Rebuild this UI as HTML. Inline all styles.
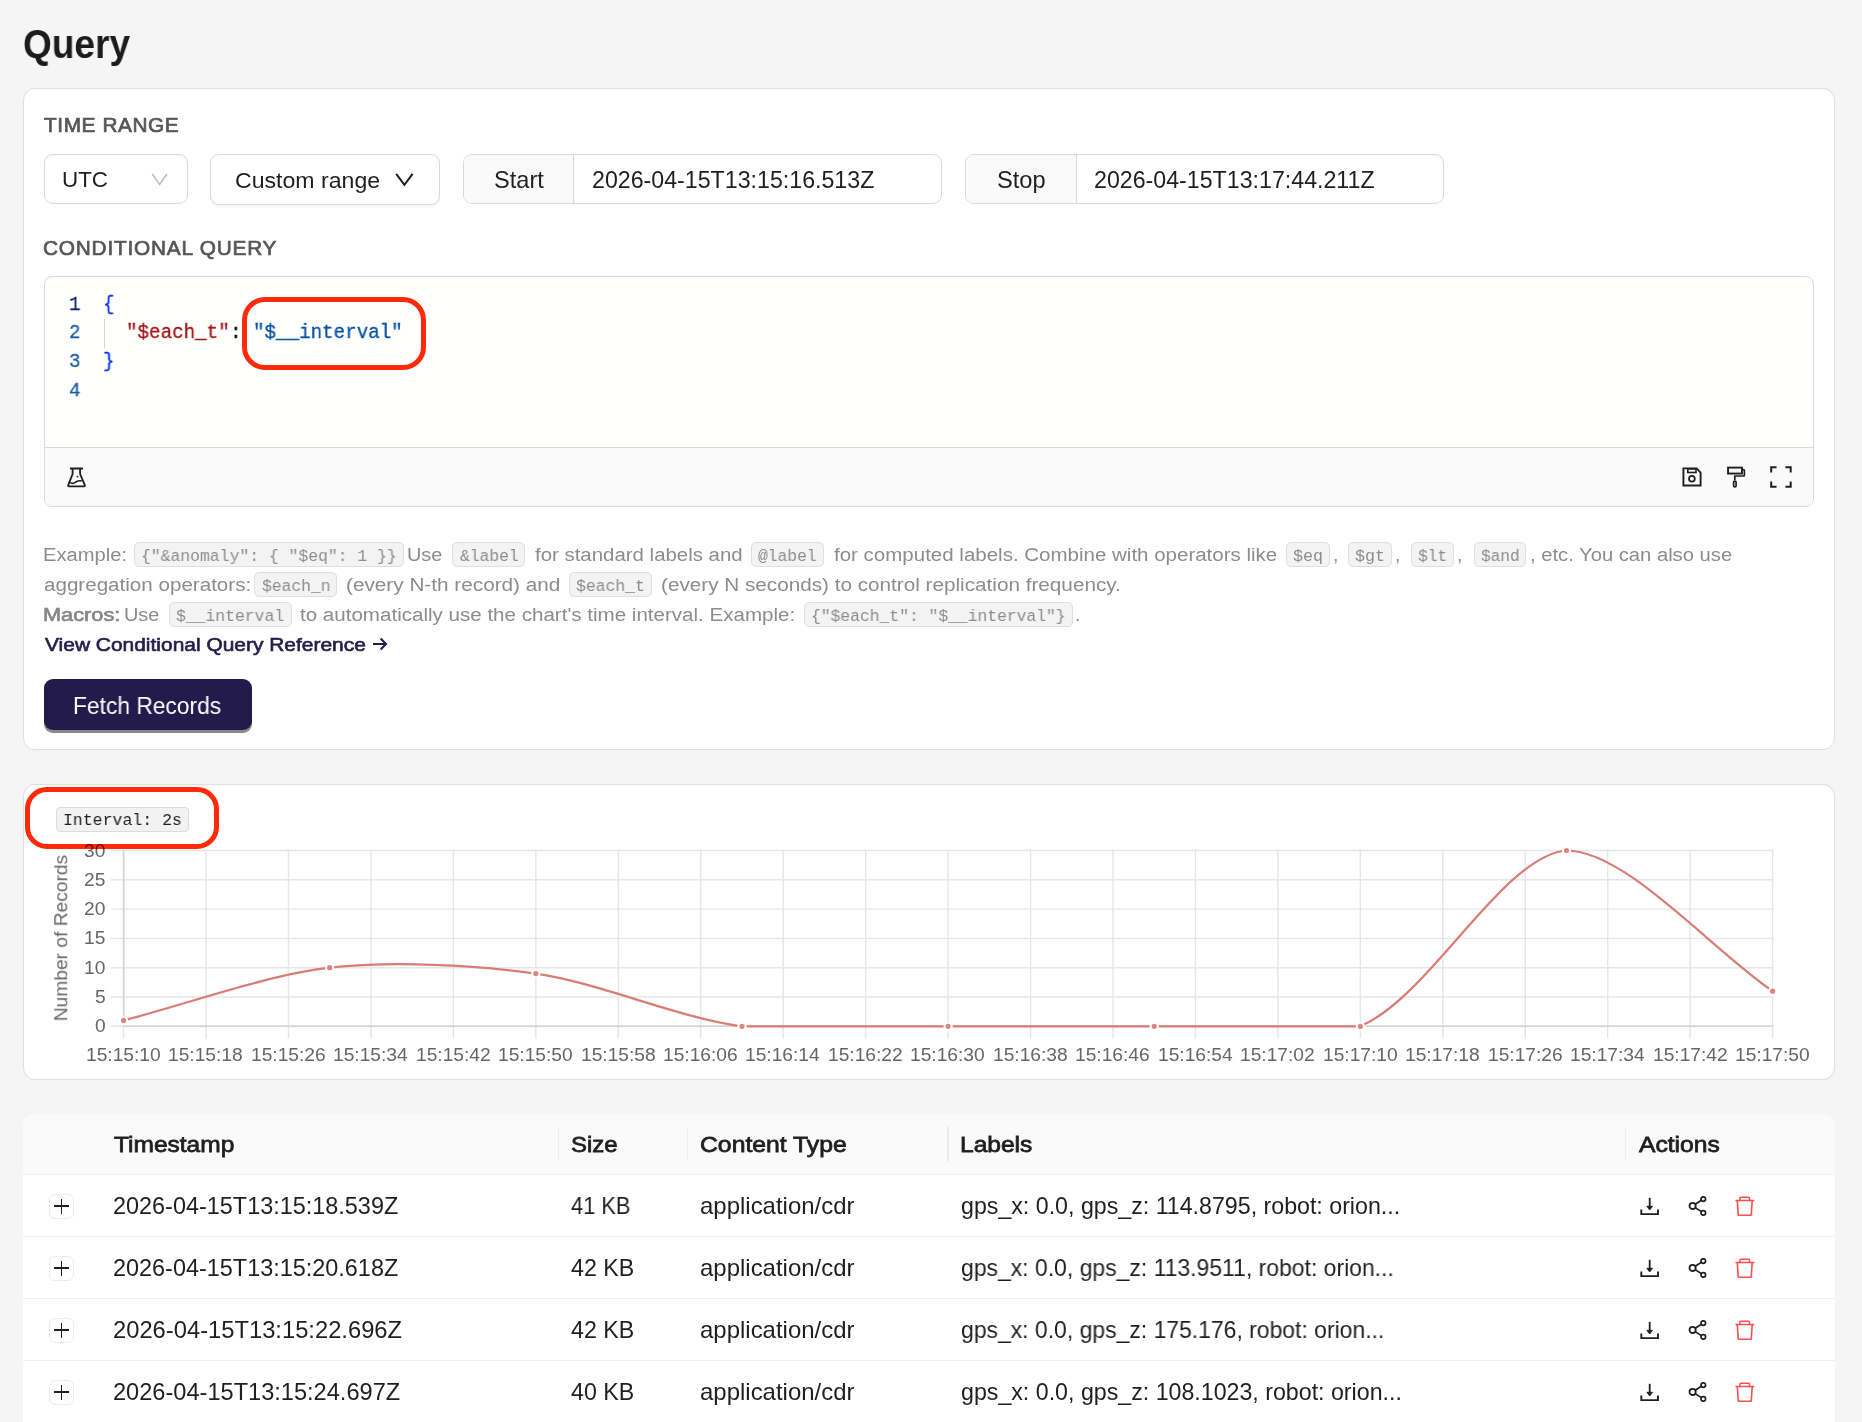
<!DOCTYPE html>
<html><head><meta charset="utf-8"><title>Query</title>
<style>
html,body{margin:0;padding:0;}
body{width:1862px;height:1422px;overflow:hidden;background:#f5f5f5;position:relative;font-family:'Liberation Sans',sans-serif;}
.t{position:absolute;white-space:pre;line-height:0;transform-origin:0 0;will-change:transform;}
.b{position:absolute;}
</style></head><body>
<div class="t" style="left:23.22px;top:44.19px;font-size:39.8px;color:#1c1c1c;font-weight:bold;transform:scaleX(0.9300);">Query</div>
<div class="b" style="left:23px;top:88px;width:1812.00px;height:662.00px;background:#fff;border:1px solid #dedede;border-radius:12px;box-sizing:border-box;"></div>
<div class="t" style="left:44.03px;top:124.68px;font-size:20.8px;color:#575757;-webkit-text-stroke:0.71px #575757;letter-spacing:0.592px;">TIME RANGE</div>
<div class="b" style="left:44px;top:154px;width:144.00px;height:50.00px;background:#fff;border:1px solid #d9d9d9;border-radius:9px;box-sizing:border-box;"></div>
<div class="t" style="left:61.78px;top:180.03px;font-size:22.4px;color:#1f1f1f;transform:scaleX(0.9895);">UTC</div>
<svg class="b" style="left:150px;top:171px;" width="20" height="16" viewBox="0 0 20 16"><polyline points="2.2,3 9.6,13.4 17,3" fill="none" stroke="#bdbdbd" stroke-width="1.6"/></svg>
<div class="b" style="left:210px;top:154px;width:230.00px;height:50.80px;background:#fff;border:1px solid #d9d9d9;border-radius:9px;box-sizing:border-box;box-shadow:0 3px 0 rgba(0,0,0,0.025);"></div>
<div class="t" style="left:234.84px;top:180.73px;font-size:22.4px;color:#1f1f1f;transform:scaleX(1.0317);">Custom range</div>
<svg class="b" style="left:392px;top:170px;" width="24" height="18" viewBox="0 0 24 18"><polyline points="4.2,3.9 12.4,14.9 20.6,3.9" fill="none" stroke="#1f1f1f" stroke-width="2"/></svg>
<div class="b" style="left:463px;top:154px;width:479.00px;height:50.00px;background:#fff;border:1px solid #d9d9d9;border-radius:9px;box-sizing:border-box;"></div>
<div class="b" style="left:464px;top:155px;width:109.00px;height:48.00px;background:#fafafa;border-radius:8px 0 0 8px;"></div>
<div class="b" style="left:573px;top:155px;width:1.00px;height:48.00px;background:#d9d9d9;"></div>
<div class="t" style="left:493.64px;top:179.95px;font-size:23.2px;color:#1f1f1f;transform:scaleX(1.0169);">Start</div>
<div class="t" style="left:592.14px;top:179.95px;font-size:23.2px;color:#1f1f1f;">2026-04-15T13:15:16.513Z</div>
<div class="b" style="left:965px;top:154px;width:479.00px;height:50.00px;background:#fff;border:1px solid #d9d9d9;border-radius:9px;box-sizing:border-box;"></div>
<div class="b" style="left:966px;top:155px;width:110.00px;height:48.00px;background:#fafafa;border-radius:8px 0 0 8px;"></div>
<div class="b" style="left:1076px;top:155px;width:1.00px;height:48.00px;background:#d9d9d9;"></div>
<div class="t" style="left:996.54px;top:179.95px;font-size:23.2px;color:#1f1f1f;transform:scaleX(1.0196);">Stop</div>
<div class="t" style="left:1093.84px;top:179.95px;font-size:23.2px;color:#1f1f1f;">2026-04-15T13:17:44.211Z</div>
<div class="t" style="left:43.46px;top:248.18px;font-size:20.8px;color:#575757;-webkit-text-stroke:0.71px #575757;letter-spacing:0.798px;">CONDITIONAL QUERY</div>
<div class="b" style="left:44px;top:276px;width:1770.00px;height:231.00px;background:#fffffe;border:1px solid #d9d9d9;border-radius:8px;box-sizing:border-box;overflow:hidden;"></div>
<div class="b" style="left:45px;top:447px;width:1768.00px;height:59.00px;background:#fafafa;border-top:1px solid #dadada;border-radius:0 0 7px 7px;box-sizing:border-box;"></div>
<div class="t" style="left:68.60px;top:304.55px;font-size:20.5px;font-family:'Liberation Mono',monospace;color:#0b216f;transform:scaleX(0.9366);-webkit-text-stroke:0.3px #0b216f">1</div>
<div class="t" style="left:68.60px;top:333.35px;font-size:20.5px;font-family:'Liberation Mono',monospace;color:#1c5ea6;transform:scaleX(0.9366);-webkit-text-stroke:0.3px #1c5ea6">2</div>
<div class="t" style="left:68.60px;top:362.15px;font-size:20.5px;font-family:'Liberation Mono',monospace;color:#1c5ea6;transform:scaleX(0.9366);-webkit-text-stroke:0.3px #1c5ea6">3</div>
<div class="t" style="left:68.60px;top:390.95px;font-size:20.5px;font-family:'Liberation Mono',monospace;color:#1c5ea6;transform:scaleX(0.9366);-webkit-text-stroke:0.3px #1c5ea6">4</div>
<div class="t" style="left:103.40px;top:304.55px;font-size:20.5px;font-family:'Liberation Mono',monospace;color:#0431fa;transform:scaleX(0.9366);-webkit-text-stroke:0.3px #0431fa">{</div>
<div class="t" style="left:126.44px;top:333.35px;font-size:20.5px;font-family:'Liberation Mono',monospace;color:#a31515;transform:scaleX(0.9366);-webkit-text-stroke:0.3px #a31515">"$each_t"</div>
<div class="t" style="left:230.12px;top:333.35px;font-size:20.5px;font-family:'Liberation Mono',monospace;color:#000000;transform:scaleX(0.9366);-webkit-text-stroke:0.3px #000000">:</div>
<div class="t" style="left:253.16px;top:333.35px;font-size:20.5px;font-family:'Liberation Mono',monospace;color:#0451a5;transform:scaleX(0.9366);-webkit-text-stroke:0.3px #0451a5">"$__interval"</div>
<div class="t" style="left:103.40px;top:362.15px;font-size:20.5px;font-family:'Liberation Mono',monospace;color:#0431fa;transform:scaleX(0.9366);-webkit-text-stroke:0.3px #0431fa">}</div>
<div class="b" style="left:104.2px;top:319px;width:1.20px;height:28.50px;background:#d3d3d3;"></div>
<svg class="b" style="left:66.5px;top:466.5px;" width="19" height="21" viewBox="0 0 19 21"><path d="M3 1.5h13M5.6 1.5v5.5L1.2 18.1c-.3.7.1 1.2.8 1.2h15c.7 0 1.1-.5.8-1.2L13.1 7V1.5" fill="none" stroke="#1f1f1f" stroke-width="1.85" stroke-linejoin="round"/><path d="M3.1 15.2c1.5 1.5 3 1.4 4.7.4 1.7-1.5 3.6-2.3 6.9-1.7" fill="none" stroke="#1f1f1f" stroke-width="1.6"/><circle cx="10.5" cy="9.6" r="0.95" fill="#1f1f1f"/></svg>
<svg class="b" style="left:1681.5px;top:466.5px;" width="20" height="20" viewBox="0 0 20 20"><path d="M1.4 1.4h13.2l4 4.2v12.9H1.4z" fill="none" stroke="#1f1f1f" stroke-width="1.9" stroke-linejoin="miter"/><rect x="5.8" y="1.9" width="8.2" height="3.6" fill="none" stroke="#1f1f1f" stroke-width="1.6"/><circle cx="9.9" cy="11.8" r="2.9" fill="none" stroke="#1f1f1f" stroke-width="1.8"/></svg>
<svg class="b" style="left:1727px;top:466px;" width="20" height="22" viewBox="0 0 20 22"><rect x="1.05" y="1.6" width="13.9" height="5.95" fill="none" stroke="#1f1f1f" stroke-width="1.9"/><path d="M15 3.7h1.4c.6 0 1 .4 1 1V9c0 .6-.4 1-1 1H7.8v4.2" fill="none" stroke="#1f1f1f" stroke-width="1.7"/><rect x="6.6" y="15" width="2.5" height="5.9" rx="1.25" fill="none" stroke="#1f1f1f" stroke-width="1.7"/></svg>
<svg class="b" style="left:1770px;top:466px;" width="22" height="22" viewBox="0 0 22 22"><path d="M1.2 6.6V1.3h5.3M15.4 1.3h5.3v5.3M1.2 15.4v5.3h5.3M15.4 20.7h5.3v-5.3" fill="none" stroke="#1f1f1f" stroke-width="2"/></svg>
<div class="t" style="left:42.74px;top:554.94px;font-size:19.2px;color:#8c8c8c;transform:scaleX(1.0508);">Example:</div>
<div class="b" style="left:134.3px;top:542.3000000000001px;width:270.10px;height:24.90px;background:#f3f3f3;border:1px solid #dfdfdf;border-radius:5px;box-sizing:border-box;"></div>
<div class="t" style="left:141.40px;top:557.16px;font-size:16.7px;font-family:'Liberation Mono',monospace;color:#8c8c8c;transform:scaleX(0.9823)">{"&amp;anomaly": { "$eq": 1 }}</div>
<div class="t" style="left:407.46px;top:554.94px;font-size:19.2px;color:#8c8c8c;transform:scaleX(1.0370);">Use</div>
<div class="b" style="left:452.4px;top:542.3000000000001px;width:73.00px;height:24.90px;background:#f3f3f3;border:1px solid #dfdfdf;border-radius:5px;box-sizing:border-box;"></div>
<div class="t" style="left:459.50px;top:557.16px;font-size:16.7px;font-family:'Liberation Mono',monospace;color:#8c8c8c;transform:scaleX(0.9780)">&amp;label</div>
<div class="t" style="left:535.09px;top:554.94px;font-size:19.2px;color:#8c8c8c;transform:scaleX(1.0639);">for standard labels and</div>
<div class="b" style="left:751.2px;top:542.3000000000001px;width:72.90px;height:24.90px;background:#f3f3f3;border:1px solid #dfdfdf;border-radius:5px;box-sizing:border-box;"></div>
<div class="t" style="left:758.30px;top:557.16px;font-size:16.7px;font-family:'Liberation Mono',monospace;color:#8c8c8c;transform:scaleX(0.9764)">@label</div>
<div class="t" style="left:834.09px;top:554.94px;font-size:19.2px;color:#8c8c8c;transform:scaleX(1.0684);">for computed labels. Combine with operators like</div>
<div class="b" style="left:1286.3px;top:542.3000000000001px;width:44.10px;height:24.90px;background:#f3f3f3;border:1px solid #dfdfdf;border-radius:5px;box-sizing:border-box;"></div>
<div class="t" style="left:1293.40px;top:557.16px;font-size:16.7px;font-family:'Liberation Mono',monospace;color:#8c8c8c;transform:scaleX(0.9947)">$eq</div>
<div class="t" style="left:1333.27px;top:554.94px;font-size:19.2px;color:#8c8c8c;">,</div>
<div class="b" style="left:1348px;top:542.3000000000001px;width:44.00px;height:24.90px;background:#f3f3f3;border:1px solid #dfdfdf;border-radius:5px;box-sizing:border-box;"></div>
<div class="t" style="left:1355.10px;top:557.16px;font-size:16.7px;font-family:'Liberation Mono',monospace;color:#8c8c8c;transform:scaleX(0.9914)">$gt</div>
<div class="t" style="left:1395.27px;top:554.94px;font-size:19.2px;color:#8c8c8c;">,</div>
<div class="b" style="left:1411px;top:542.3000000000001px;width:43.40px;height:24.90px;background:#f3f3f3;border:1px solid #dfdfdf;border-radius:5px;box-sizing:border-box;"></div>
<div class="t" style="left:1418.10px;top:557.16px;font-size:16.7px;font-family:'Liberation Mono',monospace;color:#8c8c8c;transform:scaleX(0.9714)">$lt</div>
<div class="t" style="left:1457.27px;top:554.94px;font-size:19.2px;color:#8c8c8c;">,</div>
<div class="b" style="left:1473.5px;top:542.3000000000001px;width:52.90px;height:24.90px;background:#f3f3f3;border:1px solid #dfdfdf;border-radius:5px;box-sizing:border-box;"></div>
<div class="t" style="left:1480.60px;top:557.16px;font-size:16.7px;font-family:'Liberation Mono',monospace;color:#8c8c8c;transform:scaleX(0.9656)">$and</div>
<div class="t" style="left:1529.88px;top:554.94px;font-size:19.2px;color:#8c8c8c;transform:scaleX(1.0527);">, etc. You can also use</div>
<div class="t" style="left:43.52px;top:584.74px;font-size:19.2px;color:#8c8c8c;transform:scaleX(1.0731);">aggregation operators:</div>
<div class="b" style="left:254.4px;top:572.1px;width:82.85px;height:24.90px;background:#f3f3f3;border:1px solid #dfdfdf;border-radius:5px;box-sizing:border-box;"></div>
<div class="t" style="left:261.50px;top:586.96px;font-size:16.7px;font-family:'Liberation Mono',monospace;color:#8c8c8c;transform:scaleX(0.9788)">$each_n</div>
<div class="t" style="left:346.40px;top:584.74px;font-size:19.2px;color:#8c8c8c;transform:scaleX(1.0809);">(every N-th record) and</div>
<div class="b" style="left:569.2px;top:572.1px;width:83.20px;height:24.90px;background:#f3f3f3;border:1px solid #dfdfdf;border-radius:5px;box-sizing:border-box;"></div>
<div class="t" style="left:576.30px;top:586.96px;font-size:16.7px;font-family:'Liberation Mono',monospace;color:#8c8c8c;transform:scaleX(0.9837)">$each_t</div>
<div class="t" style="left:661.21px;top:584.74px;font-size:19.2px;color:#8c8c8c;transform:scaleX(1.0788);">(every N seconds) to control replication frequency.</div>
<div class="t" style="left:42.60px;top:614.54px;font-size:19.2px;color:#868686;-webkit-text-stroke:0.65px #868686;transform:scaleX(1.1333);">Macros:</div>
<div class="t" style="left:124.26px;top:614.54px;font-size:19.2px;color:#8c8c8c;transform:scaleX(1.0370);">Use</div>
<div class="b" style="left:169.3px;top:601.9000000000001px;width:122.40px;height:24.90px;background:#f3f3f3;border:1px solid #dfdfdf;border-radius:5px;box-sizing:border-box;"></div>
<div class="t" style="left:176.40px;top:616.76px;font-size:16.7px;font-family:'Liberation Mono',monospace;color:#8c8c8c;transform:scaleX(0.9817)">$__interval</div>
<div class="t" style="left:300.29px;top:614.54px;font-size:19.2px;color:#8c8c8c;transform:scaleX(1.0714);">to automatically use the chart's time interval. Example:</div>
<div class="b" style="left:804.3px;top:601.9000000000001px;width:269.00px;height:24.90px;background:#f3f3f3;border:1px solid #dfdfdf;border-radius:5px;box-sizing:border-box;"></div>
<div class="t" style="left:811.40px;top:616.76px;font-size:16.7px;font-family:'Liberation Mono',monospace;color:#8c8c8c;transform:scaleX(0.9780)">{"$each_t": "$__interval"}</div>
<div class="t" style="left:1075.27px;top:614.54px;font-size:19.2px;color:#8c8c8c;">.</div>
<div class="t" style="left:44.70px;top:645.44px;font-size:19.2px;color:#231c4c;-webkit-text-stroke:0.65px #231c4c;transform:scaleX(1.0911);">View Conditional Query Reference</div>
<svg class="b" style="left:372px;top:637px;" width="16" height="14" viewBox="0 0 16 14"><path d="M1 7h13M8.6 1.6L14 7l-5.4 5.4" fill="none" stroke="#231c4c" stroke-width="2.1"/></svg>
<div class="b" style="left:44px;top:679px;width:208.00px;height:50.50px;background:#231b4b;border-radius:9px;box-shadow:0 3px 0 #8a8a8a;"></div>
<div class="t" style="left:73.32px;top:705.62px;font-size:23px;color:#ffffff;transform:scaleX(0.9908);">Fetch Records</div>
<div class="b" style="left:242.3px;top:297.3px;width:183.70px;height:73.10px;border:5px solid #ff2a0a;border-radius:23px;box-sizing:border-box;mix-blend-mode:multiply;"></div>
<div class="b" style="left:23px;top:784px;width:1812.00px;height:295.50px;background:#fff;border:1px solid #dedede;border-radius:12px;box-sizing:border-box;"></div>
<svg class="b" style="left:0;top:0" width="1862" height="1422"><line x1="111" y1="1026.30" x2="1773.40" y2="1026.30" stroke="#e6e6e6" stroke-width="1.4"/><line x1="111" y1="997.00" x2="1773.40" y2="997.00" stroke="#e6e6e6" stroke-width="1.4"/><line x1="111" y1="967.70" x2="1773.40" y2="967.70" stroke="#e6e6e6" stroke-width="1.4"/><line x1="111" y1="938.40" x2="1773.40" y2="938.40" stroke="#e6e6e6" stroke-width="1.4"/><line x1="111" y1="909.10" x2="1773.40" y2="909.10" stroke="#e6e6e6" stroke-width="1.4"/><line x1="111" y1="879.80" x2="1773.40" y2="879.80" stroke="#e6e6e6" stroke-width="1.4"/><line x1="111" y1="850.50" x2="1773.40" y2="850.50" stroke="#e6e6e6" stroke-width="1.4"/><line x1="123.60" y1="849.7" x2="123.60" y2="1038.4" stroke="#e6e6e6" stroke-width="1.4"/><line x1="206.05" y1="849.7" x2="206.05" y2="1038.4" stroke="#e6e6e6" stroke-width="1.4"/><line x1="288.50" y1="849.7" x2="288.50" y2="1038.4" stroke="#e6e6e6" stroke-width="1.4"/><line x1="370.95" y1="849.7" x2="370.95" y2="1038.4" stroke="#e6e6e6" stroke-width="1.4"/><line x1="453.40" y1="849.7" x2="453.40" y2="1038.4" stroke="#e6e6e6" stroke-width="1.4"/><line x1="535.85" y1="849.7" x2="535.85" y2="1038.4" stroke="#e6e6e6" stroke-width="1.4"/><line x1="618.30" y1="849.7" x2="618.30" y2="1038.4" stroke="#e6e6e6" stroke-width="1.4"/><line x1="700.75" y1="849.7" x2="700.75" y2="1038.4" stroke="#e6e6e6" stroke-width="1.4"/><line x1="783.20" y1="849.7" x2="783.20" y2="1038.4" stroke="#e6e6e6" stroke-width="1.4"/><line x1="865.65" y1="849.7" x2="865.65" y2="1038.4" stroke="#e6e6e6" stroke-width="1.4"/><line x1="948.10" y1="849.7" x2="948.10" y2="1038.4" stroke="#e6e6e6" stroke-width="1.4"/><line x1="1030.55" y1="849.7" x2="1030.55" y2="1038.4" stroke="#e6e6e6" stroke-width="1.4"/><line x1="1113.00" y1="849.7" x2="1113.00" y2="1038.4" stroke="#e6e6e6" stroke-width="1.4"/><line x1="1195.45" y1="849.7" x2="1195.45" y2="1038.4" stroke="#e6e6e6" stroke-width="1.4"/><line x1="1277.90" y1="849.7" x2="1277.90" y2="1038.4" stroke="#e6e6e6" stroke-width="1.4"/><line x1="1360.35" y1="849.7" x2="1360.35" y2="1038.4" stroke="#e6e6e6" stroke-width="1.4"/><line x1="1442.80" y1="849.7" x2="1442.80" y2="1038.4" stroke="#e6e6e6" stroke-width="1.4"/><line x1="1525.25" y1="849.7" x2="1525.25" y2="1038.4" stroke="#e6e6e6" stroke-width="1.4"/><line x1="1607.70" y1="849.7" x2="1607.70" y2="1038.4" stroke="#e6e6e6" stroke-width="1.4"/><line x1="1690.15" y1="849.7" x2="1690.15" y2="1038.4" stroke="#e6e6e6" stroke-width="1.4"/><line x1="1772.60" y1="849.7" x2="1772.60" y2="1038.4" stroke="#e6e6e6" stroke-width="1.4"/><line x1="123.60" y1="1026.30" x2="1773.40" y2="1026.30" stroke="#d4d4d4" stroke-width="1.6"/><line x1="123.60" y1="849.7" x2="123.60" y2="1026.30" stroke="#d4d4d4" stroke-width="1.6"/><path d="M123.60 1020.44 C185.44 1004.62 266.92 974.84 329.73 967.70 C390.59 960.78 474.98 964.91 535.85 973.56 C598.66 982.49 679.16 1018.26 741.98 1026.30 C802.83 1026.30 886.26 1026.30 948.10 1026.30 C1009.94 1026.30 1092.39 1026.30 1154.22 1026.30 C1216.06 1026.30 1306.91 1026.30 1360.35 1026.30 C1430.59 996.35 1502.10 855.99 1566.47 850.50 C1625.77 850.50 1710.76 948.95 1772.60 991.14" fill="none" stroke="#d97c76" stroke-width="2.2"/><circle cx="123.60" cy="1020.44" r="3.6" fill="#dc857f" stroke="#fff" stroke-width="2"/><circle cx="329.73" cy="967.70" r="3.6" fill="#dc857f" stroke="#fff" stroke-width="2"/><circle cx="535.85" cy="973.56" r="3.6" fill="#dc857f" stroke="#fff" stroke-width="2"/><circle cx="741.98" cy="1026.30" r="3.6" fill="#dc857f" stroke="#fff" stroke-width="2"/><circle cx="948.10" cy="1026.30" r="3.6" fill="#dc857f" stroke="#fff" stroke-width="2"/><circle cx="1154.22" cy="1026.30" r="3.6" fill="#dc857f" stroke="#fff" stroke-width="2"/><circle cx="1360.35" cy="1026.30" r="3.6" fill="#dc857f" stroke="#fff" stroke-width="2"/><circle cx="1566.47" cy="850.50" r="3.6" fill="#dc857f" stroke="#fff" stroke-width="2"/><circle cx="1772.60" cy="991.14" r="3.6" fill="#dc857f" stroke="#fff" stroke-width="2"/></svg>
<div class="t" style="left:95.06px;top:1026.34px;font-size:19.2px;color:#666666;">0</div>
<div class="t" style="left:95.11px;top:997.04px;font-size:19.2px;color:#666666;">5</div>
<div class="t" style="left:84.41px;top:967.74px;font-size:19.2px;color:#666666;">10</div>
<div class="t" style="left:84.46px;top:938.44px;font-size:19.2px;color:#666666;">15</div>
<div class="t" style="left:84.41px;top:909.14px;font-size:19.2px;color:#666666;">20</div>
<div class="t" style="left:84.46px;top:879.84px;font-size:19.2px;color:#666666;">25</div>
<div class="t" style="left:84.41px;top:850.54px;font-size:19.2px;color:#666666;">30</div>
<div class="t" style="left:85.87px;top:1055.34px;font-size:19.2px;color:#666666;">15:15:10</div>
<div class="t" style="left:168.37px;top:1055.34px;font-size:19.2px;color:#666666;">15:15:18</div>
<div class="t" style="left:250.82px;top:1055.34px;font-size:19.2px;color:#666666;">15:15:26</div>
<div class="t" style="left:333.13px;top:1055.34px;font-size:19.2px;color:#666666;">15:15:34</div>
<div class="t" style="left:415.79px;top:1055.34px;font-size:19.2px;color:#666666;">15:15:42</div>
<div class="t" style="left:498.12px;top:1055.34px;font-size:19.2px;color:#666666;">15:15:50</div>
<div class="t" style="left:580.62px;top:1055.34px;font-size:19.2px;color:#666666;">15:15:58</div>
<div class="t" style="left:663.07px;top:1055.34px;font-size:19.2px;color:#666666;">15:16:06</div>
<div class="t" style="left:745.38px;top:1055.34px;font-size:19.2px;color:#666666;">15:16:14</div>
<div class="t" style="left:828.04px;top:1055.34px;font-size:19.2px;color:#666666;">15:16:22</div>
<div class="t" style="left:910.37px;top:1055.34px;font-size:19.2px;color:#666666;">15:16:30</div>
<div class="t" style="left:992.87px;top:1055.34px;font-size:19.2px;color:#666666;">15:16:38</div>
<div class="t" style="left:1075.32px;top:1055.34px;font-size:19.2px;color:#666666;">15:16:46</div>
<div class="t" style="left:1157.63px;top:1055.34px;font-size:19.2px;color:#666666;">15:16:54</div>
<div class="t" style="left:1240.29px;top:1055.34px;font-size:19.2px;color:#666666;">15:17:02</div>
<div class="t" style="left:1322.62px;top:1055.34px;font-size:19.2px;color:#666666;">15:17:10</div>
<div class="t" style="left:1405.12px;top:1055.34px;font-size:19.2px;color:#666666;">15:17:18</div>
<div class="t" style="left:1487.57px;top:1055.34px;font-size:19.2px;color:#666666;">15:17:26</div>
<div class="t" style="left:1569.88px;top:1055.34px;font-size:19.2px;color:#666666;">15:17:34</div>
<div class="t" style="left:1652.54px;top:1055.34px;font-size:19.2px;color:#666666;">15:17:42</div>
<div class="t" style="left:1734.87px;top:1055.34px;font-size:19.2px;color:#666666;">15:17:50</div>
<div class="t" style="left:-21.83px;top:938px;font-size:19.2px;color:#666666;transform-origin:83.23px 0px;transform:rotate(-90deg)">Number of Records</div>
<div class="b" style="left:56.4px;top:807.2px;width:132.30px;height:24.40px;background:#f2f2f2;border:1px solid #dcdcdc;border-radius:4px;box-sizing:border-box;"></div>
<div class="t" style="left:63.29px;top:821.10px;font-size:17.3px;color:#1f1f1f;font-family:'Liberation Mono',monospace;transform:scaleX(0.9556);">Interval: 2s</div>
<div class="b" style="left:25.3px;top:787px;width:194.10px;height:62.00px;border:5px solid #ff2a0a;border-radius:22px;box-sizing:border-box;mix-blend-mode:multiply;"></div>
<div class="b" style="left:23px;top:1114px;width:1812.00px;height:326.00px;background:#fff;border-radius:12px 12px 0 0;"></div>
<div class="b" style="left:23px;top:1114px;width:1812.00px;height:61.00px;background:#fafafa;border-radius:12px 12px 0 0;border-bottom:1px solid #f0f0f0;box-sizing:border-box;"></div>
<div class="b" style="left:557.9px;top:1126.6px;width:1.20px;height:34.80px;background:#ececec;"></div>
<div class="b" style="left:687px;top:1126.6px;width:1.20px;height:34.80px;background:#ececec;"></div>
<div class="b" style="left:947.4px;top:1126.6px;width:1.20px;height:34.80px;background:#ececec;"></div>
<div class="b" style="left:1625px;top:1126.6px;width:1.20px;height:34.80px;background:#ececec;"></div>
<div class="t" style="left:113.65px;top:1144.83px;font-size:22.4px;color:#1f1f1f;-webkit-text-stroke:0.76px #1f1f1f;transform:scaleX(1.0946);">Timestamp</div>
<div class="t" style="left:570.82px;top:1144.83px;font-size:22.4px;color:#1f1f1f;-webkit-text-stroke:0.76px #1f1f1f;transform:scaleX(1.0695);">Size</div>
<div class="t" style="left:699.76px;top:1144.83px;font-size:22.4px;color:#1f1f1f;-webkit-text-stroke:0.76px #1f1f1f;transform:scaleX(1.1051);">Content Type</div>
<div class="t" style="left:959.97px;top:1144.83px;font-size:22.4px;color:#1f1f1f;-webkit-text-stroke:0.76px #1f1f1f;transform:scaleX(1.0964);">Labels</div>
<div class="t" style="left:1639.44px;top:1144.83px;font-size:22.4px;color:#1f1f1f;-webkit-text-stroke:0.76px #1f1f1f;transform:scaleX(1.1001);">Actions</div>
<div class="b" style="left:23px;top:1236px;width:1812.00px;height:1.00px;background:#f0f0f0;"></div>
<div class="b" style="left:49.3px;top:1194.4px;width:24.30px;height:24.60px;border:1px solid #ececec;border-radius:6px;box-sizing:border-box;background:#fff;"></div>
<div class="b" style="left:54px;top:1205.3px;width:15.00px;height:1.70px;background:#1f1f1f;"></div>
<div class="b" style="left:60.7px;top:1198.5px;width:1.70px;height:15.30px;background:#1f1f1f;"></div>
<div class="t" style="left:113.03px;top:1206.25px;font-size:23.2px;color:#1f1f1f;transform:scaleX(1.0103);">2026-04-15T13:15:18.539Z</div>
<div class="t" style="left:571.41px;top:1206.25px;font-size:23.2px;color:#1f1f1f;transform:scaleX(0.9401);">41 KB</div>
<div class="t" style="left:699.98px;top:1206.25px;font-size:23.2px;color:#1f1f1f;transform:scaleX(1.0334);">application/cdr</div>
<div class="t" style="left:961.01px;top:1206.25px;font-size:23.2px;color:#1f1f1f;">gps_x: 0.0, gps_z: 114.8795, robot: orion...</div>
<svg class="b" style="left:1639.5px;top:1196.5px;" width="19.2" height="18.4" viewBox="0 0 19.2 18.4"><path d="M9.7 0.8v9.4" stroke="#1f1f1f" stroke-width="1.8" fill="none"/><path d="M6.9 9.3l2.8 3.7 2.8-3.7z" fill="#1f1f1f" stroke="#1f1f1f" stroke-width="0.9" stroke-linejoin="round"/><path d="M1.3 12.5v4.7h16.7v-4.7" fill="none" stroke="#1f1f1f" stroke-width="1.9"/></svg>
<svg class="b" style="left:1687.5px;top:1195.8px;" width="20" height="20" viewBox="0 0 20 20"><circle cx="4.6" cy="9.9" r="3.1" fill="none" stroke="#1f1f1f" stroke-width="1.8"/><circle cx="15.3" cy="3.1" r="2.3" fill="none" stroke="#1f1f1f" stroke-width="1.7"/><circle cx="15.3" cy="16.9" r="2.3" fill="none" stroke="#1f1f1f" stroke-width="1.7"/><path d="M7.2 8.2l6.2-4M7.2 11.6l6.2 4" stroke="#1f1f1f" stroke-width="1.7"/></svg>
<svg class="b" style="left:1735.3px;top:1195.8px;" width="20" height="20.4" viewBox="0 0 20 20.4"><path d="M0.4 4.5h18.9M4.9 4.5V2.3c0-.6.4-1 1-1h7.6c.6 0 1 .4 1 1v2.2" fill="none" stroke="#ff4d4f" stroke-width="1.5"/><path d="M2.3 4.6l0.9 13.8c.05.6.5 1 1.1 1h10.9c.6 0 1.05-.4 1.1-1l.9-13.8" fill="none" stroke="#ff4d4f" stroke-width="1.6"/></svg>
<div class="b" style="left:23px;top:1298px;width:1812.00px;height:1.00px;background:#f0f0f0;"></div>
<div class="b" style="left:49.3px;top:1256.4px;width:24.30px;height:24.60px;border:1px solid #ececec;border-radius:6px;box-sizing:border-box;background:#fff;"></div>
<div class="b" style="left:54px;top:1267.3px;width:15.00px;height:1.70px;background:#1f1f1f;"></div>
<div class="b" style="left:60.7px;top:1260.5px;width:1.70px;height:15.30px;background:#1f1f1f;"></div>
<div class="t" style="left:113.03px;top:1268.25px;font-size:23.2px;color:#1f1f1f;transform:scaleX(1.0103);">2026-04-15T13:15:20.618Z</div>
<div class="t" style="left:571.38px;top:1268.25px;font-size:23.2px;color:#1f1f1f;">42 KB</div>
<div class="t" style="left:699.98px;top:1268.25px;font-size:23.2px;color:#1f1f1f;transform:scaleX(1.0334);">application/cdr</div>
<div class="t" style="left:961.02px;top:1268.25px;font-size:23.2px;color:#1f1f1f;transform:scaleX(0.9894);">gps_x: 0.0, gps_z: 113.9511, robot: orion...</div>
<svg class="b" style="left:1639.5px;top:1258.5px;" width="19.2" height="18.4" viewBox="0 0 19.2 18.4"><path d="M9.7 0.8v9.4" stroke="#1f1f1f" stroke-width="1.8" fill="none"/><path d="M6.9 9.3l2.8 3.7 2.8-3.7z" fill="#1f1f1f" stroke="#1f1f1f" stroke-width="0.9" stroke-linejoin="round"/><path d="M1.3 12.5v4.7h16.7v-4.7" fill="none" stroke="#1f1f1f" stroke-width="1.9"/></svg>
<svg class="b" style="left:1687.5px;top:1257.8px;" width="20" height="20" viewBox="0 0 20 20"><circle cx="4.6" cy="9.9" r="3.1" fill="none" stroke="#1f1f1f" stroke-width="1.8"/><circle cx="15.3" cy="3.1" r="2.3" fill="none" stroke="#1f1f1f" stroke-width="1.7"/><circle cx="15.3" cy="16.9" r="2.3" fill="none" stroke="#1f1f1f" stroke-width="1.7"/><path d="M7.2 8.2l6.2-4M7.2 11.6l6.2 4" stroke="#1f1f1f" stroke-width="1.7"/></svg>
<svg class="b" style="left:1735.3px;top:1257.8px;" width="20" height="20.4" viewBox="0 0 20 20.4"><path d="M0.4 4.5h18.9M4.9 4.5V2.3c0-.6.4-1 1-1h7.6c.6 0 1 .4 1 1v2.2" fill="none" stroke="#ff4d4f" stroke-width="1.5"/><path d="M2.3 4.6l0.9 13.8c.05.6.5 1 1.1 1h10.9c.6 0 1.05-.4 1.1-1l.9-13.8" fill="none" stroke="#ff4d4f" stroke-width="1.6"/></svg>
<div class="b" style="left:23px;top:1360px;width:1812.00px;height:1.00px;background:#f0f0f0;"></div>
<div class="b" style="left:49.3px;top:1318.4px;width:24.30px;height:24.60px;border:1px solid #ececec;border-radius:6px;box-sizing:border-box;background:#fff;"></div>
<div class="b" style="left:54px;top:1329.3px;width:15.00px;height:1.70px;background:#1f1f1f;"></div>
<div class="b" style="left:60.7px;top:1322.5px;width:1.70px;height:15.30px;background:#1f1f1f;"></div>
<div class="t" style="left:113.01px;top:1330.25px;font-size:23.2px;color:#1f1f1f;transform:scaleX(1.0239);">2026-04-15T13:15:22.696Z</div>
<div class="t" style="left:571.38px;top:1330.25px;font-size:23.2px;color:#1f1f1f;">42 KB</div>
<div class="t" style="left:699.98px;top:1330.25px;font-size:23.2px;color:#1f1f1f;transform:scaleX(1.0334);">application/cdr</div>
<div class="t" style="left:961.02px;top:1330.25px;font-size:23.2px;color:#1f1f1f;transform:scaleX(0.9891);">gps_x: 0.0, gps_z: 175.176, robot: orion...</div>
<svg class="b" style="left:1639.5px;top:1320.5px;" width="19.2" height="18.4" viewBox="0 0 19.2 18.4"><path d="M9.7 0.8v9.4" stroke="#1f1f1f" stroke-width="1.8" fill="none"/><path d="M6.9 9.3l2.8 3.7 2.8-3.7z" fill="#1f1f1f" stroke="#1f1f1f" stroke-width="0.9" stroke-linejoin="round"/><path d="M1.3 12.5v4.7h16.7v-4.7" fill="none" stroke="#1f1f1f" stroke-width="1.9"/></svg>
<svg class="b" style="left:1687.5px;top:1319.8px;" width="20" height="20" viewBox="0 0 20 20"><circle cx="4.6" cy="9.9" r="3.1" fill="none" stroke="#1f1f1f" stroke-width="1.8"/><circle cx="15.3" cy="3.1" r="2.3" fill="none" stroke="#1f1f1f" stroke-width="1.7"/><circle cx="15.3" cy="16.9" r="2.3" fill="none" stroke="#1f1f1f" stroke-width="1.7"/><path d="M7.2 8.2l6.2-4M7.2 11.6l6.2 4" stroke="#1f1f1f" stroke-width="1.7"/></svg>
<svg class="b" style="left:1735.3px;top:1319.8px;" width="20" height="20.4" viewBox="0 0 20 20.4"><path d="M0.4 4.5h18.9M4.9 4.5V2.3c0-.6.4-1 1-1h7.6c.6 0 1 .4 1 1v2.2" fill="none" stroke="#ff4d4f" stroke-width="1.5"/><path d="M2.3 4.6l0.9 13.8c.05.6.5 1 1.1 1h10.9c.6 0 1.05-.4 1.1-1l.9-13.8" fill="none" stroke="#ff4d4f" stroke-width="1.6"/></svg>
<div class="b" style="left:49.3px;top:1380.4px;width:24.30px;height:24.60px;border:1px solid #ececec;border-radius:6px;box-sizing:border-box;background:#fff;"></div>
<div class="b" style="left:54px;top:1391.3px;width:15.00px;height:1.70px;background:#1f1f1f;"></div>
<div class="b" style="left:60.7px;top:1384.5px;width:1.70px;height:15.30px;background:#1f1f1f;"></div>
<div class="t" style="left:113.02px;top:1392.25px;font-size:23.2px;color:#1f1f1f;transform:scaleX(1.0171);">2026-04-15T13:15:24.697Z</div>
<div class="t" style="left:571.38px;top:1392.25px;font-size:23.2px;color:#1f1f1f;">40 KB</div>
<div class="t" style="left:699.98px;top:1392.25px;font-size:23.2px;color:#1f1f1f;transform:scaleX(1.0334);">application/cdr</div>
<div class="t" style="left:961.02px;top:1392.25px;font-size:23.2px;color:#1f1f1f;">gps_x: 0.0, gps_z: 108.1023, robot: orion...</div>
<svg class="b" style="left:1639.5px;top:1382.5px;" width="19.2" height="18.4" viewBox="0 0 19.2 18.4"><path d="M9.7 0.8v9.4" stroke="#1f1f1f" stroke-width="1.8" fill="none"/><path d="M6.9 9.3l2.8 3.7 2.8-3.7z" fill="#1f1f1f" stroke="#1f1f1f" stroke-width="0.9" stroke-linejoin="round"/><path d="M1.3 12.5v4.7h16.7v-4.7" fill="none" stroke="#1f1f1f" stroke-width="1.9"/></svg>
<svg class="b" style="left:1687.5px;top:1381.8px;" width="20" height="20" viewBox="0 0 20 20"><circle cx="4.6" cy="9.9" r="3.1" fill="none" stroke="#1f1f1f" stroke-width="1.8"/><circle cx="15.3" cy="3.1" r="2.3" fill="none" stroke="#1f1f1f" stroke-width="1.7"/><circle cx="15.3" cy="16.9" r="2.3" fill="none" stroke="#1f1f1f" stroke-width="1.7"/><path d="M7.2 8.2l6.2-4M7.2 11.6l6.2 4" stroke="#1f1f1f" stroke-width="1.7"/></svg>
<svg class="b" style="left:1735.3px;top:1381.8px;" width="20" height="20.4" viewBox="0 0 20 20.4"><path d="M0.4 4.5h18.9M4.9 4.5V2.3c0-.6.4-1 1-1h7.6c.6 0 1 .4 1 1v2.2" fill="none" stroke="#ff4d4f" stroke-width="1.5"/><path d="M2.3 4.6l0.9 13.8c.05.6.5 1 1.1 1h10.9c.6 0 1.05-.4 1.1-1l.9-13.8" fill="none" stroke="#ff4d4f" stroke-width="1.6"/></svg>
</body></html>
